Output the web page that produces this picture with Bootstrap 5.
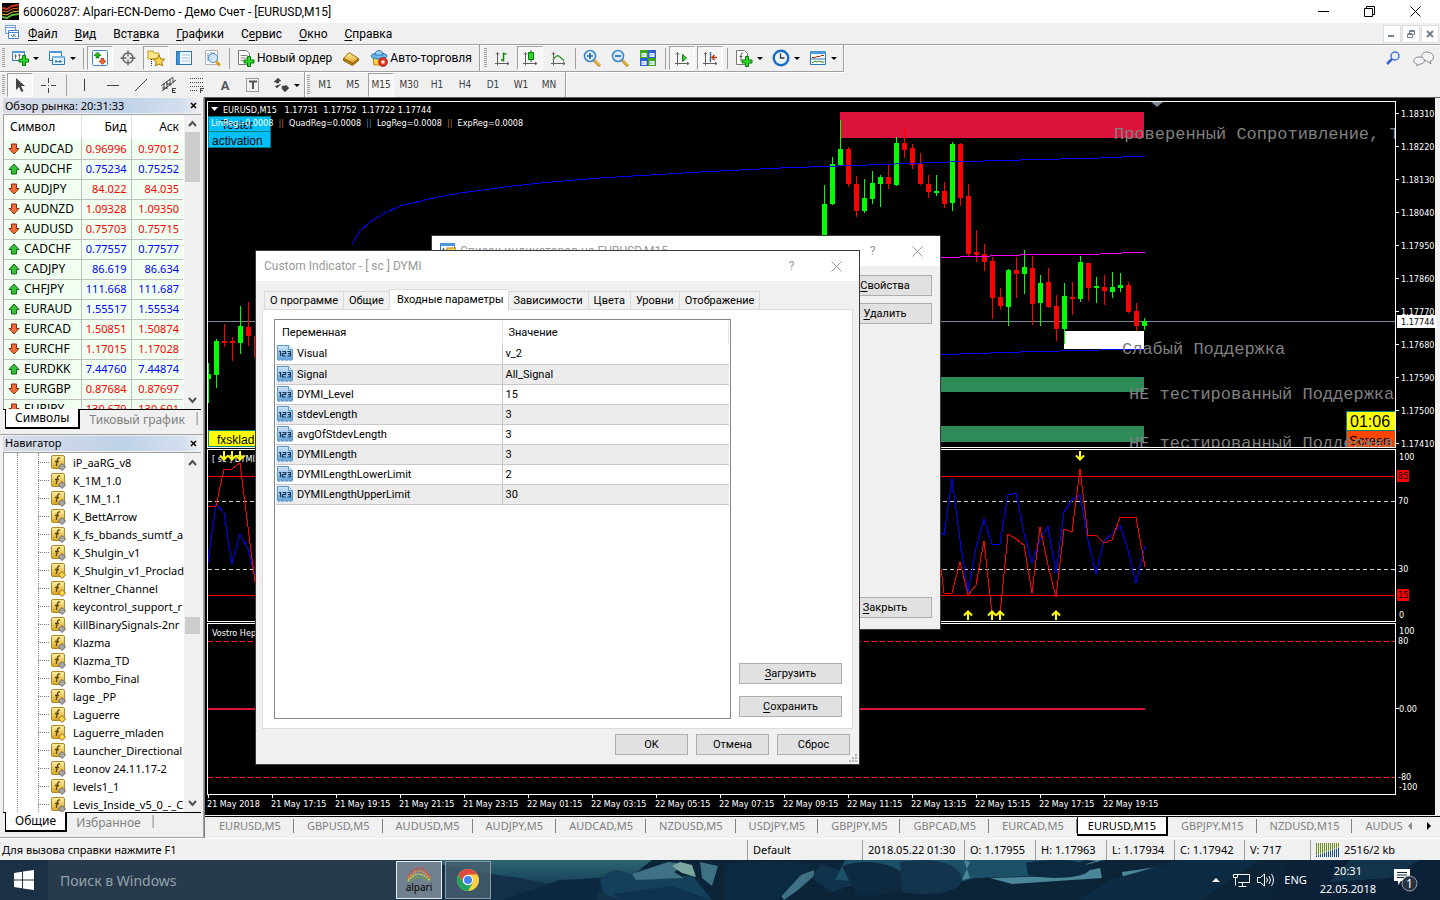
<!DOCTYPE html>
<html lang="ru">
<head>
<meta charset="utf-8">
<meta name="viewport" content="width=device-width, initial-scale=1">
<title>60060287: Alpari-ECN-Demo - Демо Счет - [EURUSD,M15]</title>
<link href="https://cdn.jsdelivr.net/npm/bootstrap@5.3.0/dist/css/bootstrap.min.css" rel="stylesheet">
<style>
:root{--ui:"Noto Sans","Open Sans",sans-serif;--dlg:Roboto,"Liberation Sans",sans-serif;--chart:"DejaVu Sans Condensed","DejaVu Sans",sans-serif;--face:#f0f0f0;--edge:#a0a0a0}
body{font:11px/16px var(--ui);color:#000;background:var(--face);overflow:hidden}
button{font:inherit;color:inherit;background:none;border:0;padding:0;border-radius:0}
a{color:inherit;text-decoration:none}
u{text-underline-offset:2px}
svg{display:block;flex:none}
/* window frame */
.titlebar{height:23px;background:#fff;font:12px/16px var(--dlg)}
.titlebar .wbtn{width:46px;height:21px}
.menubar{height:22px;border-bottom:1px solid var(--edge);box-shadow:inset 0 -1px #f0f0f0,0 1px #fff;font:12px/16px var(--dlg)}
.menubar a{padding:0 9px 0 8px}
.mdi{width:18px;height:18px;background:#fff;border:1px solid #ddd}
.toolrow{height:27px}
.toolset{height:27px;border-right:1px solid var(--edge);border-bottom:1px solid var(--edge);box-shadow:inset -1px -1px var(--face),inset 0 1px #fff,1px 1px #fff;padding-left:2px;padding-right:2px}
.toolrow.second .toolset{height:26px;border-bottom:0}
.grip{width:3px;height:20px;margin-right:1px;background:repeating-linear-gradient(#a0a0a0 0 1px,#f0f0f0 1px 2px)}
.tbtn{width:28px;height:25px}
.tbtn.drop{width:37px;padding-left:5px}
.tbtn.drop::after{content:"";border:3px solid transparent;border-top-color:#000;border-bottom:0;margin-left:4px}
.tbtn.on{width:26px;height:24px;margin:0 1px;border:1px solid #a0a0a0;border-right-color:#fff;border-bottom-color:#fff;background:repeating-conic-gradient(#fff 0 25%,#f0f0f0 0 50%) 0 0/2px 2px}
.tbtn.wide{width:auto;padding:0 5px;gap:2px;white-space:nowrap;font:12px/16px var(--dlg)}
.tbtn.tf{font:10px/14px var(--chart);color:#404040}
.tsep{width:1px;height:21px;background:#a0a0a0;margin:0 2px 0 3px}
.second .tsep{margin:0 4px}
/* left docks */
.docks{width:204px}
.dock{border:1px solid var(--edge);border-width:0 1px 1px 0;padding:1px 2px 0 3px;min-height:0}
.docktitle{height:15px;background:linear-gradient(90deg,#d9dce8,#bfd2e8 60%,#d2deee 90%,#f0f0f0);padding-left:2px}
.dockbody{border-left:1px solid var(--edge);border-top:1px solid var(--edge);background:#fff;overflow:hidden;min-height:0;margin-top:1px}
.quotes{width:179px;table-layout:fixed;font-size:11px;margin:0}
.quotes th{font-weight:400;font-size:12px;height:24px;padding:0 4px 0 6px;border-right:1px solid #e0e0e0}
.quotes td{height:20px;line-height:18px;padding:0 4px;background:#f0fff0;border-right:1px solid #c0c0c0;border-bottom:1px solid #c0c0c0;text-align:right}
.quotes td:first-child{font-size:12px;text-align:left}
.quotes td:last-child,.quotes th:last-child{border-right:0}
.quotes tr.up td+td{color:#00f}.quotes tr.dn td+td{color:#f00}
.quotes svg{display:inline-block;margin-right:4px;vertical-align:-2px}
.sbar{width:17px;background:var(--face)}
.sbar i{background:#cdcdcd;margin:0 1px;display:block}
.docktabs{height:25px;border-top:1px solid #000;font-size:12px;color:#808080;white-space:nowrap}
.docktabs button{height:19px;padding:0 9px}
.docktabs .active{color:#000;background:#fff;border:1px solid #000;border-width:0 2px 2px 1px;margin:-1px 0 0 2px;height:20px}
.tree{font-size:11px;line-height:18px;padding-top:1px;background:repeating-linear-gradient(#808080 0 1px,#fff 1px 2px) 13px 0/1px 100% no-repeat,repeating-linear-gradient(#808080 0 1px,#fff 1px 2px) 34px 0/1px 100% no-repeat}
.tree li{height:18px;padding-left:34px;white-space:nowrap;overflow:hidden}
.tree li::before{content:"";width:11px;height:1px;background:repeating-linear-gradient(90deg,#808080 0 1px,#fff 1px 2px);margin-right:1px;flex:none}
.tree svg{margin-right:7px}
/* chart window */
.chartwin{border-left:1px solid #808080;border-top:1px solid #606060;min-width:0}
.canvas{background:#000;padding:3px 0 0 2px;margin-right:5px;color:#fff;font:9px/12px var(--chart);min-height:0}
.pane{margin-bottom:1px;min-height:0}
.plot{border:1px solid #fff;position:relative;overflow:hidden;min-width:0}
.plot>svg{width:100%;height:100%}
.axis{width:39px;overflow:visible;height:100%}
.plot text{white-space:pre}
.cour{font:17px "Liberation Mono",monospace;fill:#808080}
.arial{font-family:"Liberation Sans",sans-serif}
.times{height:20px;border:0}
.times span{width:64px;flex:none;white-space:nowrap;padding-top:3px;position:relative}
.times span::before{content:"";position:absolute;left:1px;top:-1px;width:1px;height:4px;background:#fff}
.charttabs{height:22px;border-top:1px solid #000;margin-top:1px;color:#808080;overflow:hidden;padding-left:1px}
.charttabs button{height:18px;padding:0 12px 0 13px;white-space:nowrap;flex:none;border-right:1px solid transparent;background:linear-gradient(#808080,#808080) 100% 50%/1px 14px no-repeat border-box}
.charttabs .active{background:#fff;color:#000;border:1px solid #000;border-width:0 2px 2px 1px;height:19px;padding:0 10px 0 10px}
.statusbar{height:22px;border-top:1px solid #fff}
.statusbar>span{border-left:1px solid #a0a0a0;padding-left:5px;height:20px;line-height:20px;white-space:nowrap;flex:none}
/* taskbar */
.taskbar{height:40px;background:#0b2236;color:#fff;position:relative;overflow:hidden}
.taskbar>*{position:relative}
.taskbar>.scene{position:absolute;inset:0;width:100%;height:100%}
.search{width:348px;height:40px;border:0;background:#2a3e4fcc;color:#fff;font-size:14px;padding:0 12px}
.search::placeholder{color:#93a2ad;opacity:1}
.tile{width:46px;height:38px;border:1px solid #8d9ba5;background:#49606fcc;margin-right:3px}
.tile.cur{border-color:#e8ecef;background:#7c8a96e6}
/* dialogs */
.dlg{position:absolute;background:var(--face);border:1px solid #3a3a3a;font:11px/14px var(--dlg)}
.dlg header{height:30px;background:#fff;color:#999;font:12px/16px var(--dlg);padding-left:8px}
.dlg header button{width:45px}
.dbtn{height:21px;border:1px solid #adadad;background:#e1e1e1;display:block}
.dlg .nav-tabs{border:0;padding:8px 0 0 8px}
.dlg .nav-tabs .nav-link{border:1px solid #d9d9d9;border-right-width:0;border-bottom:0;border-radius:0;background:var(--face);color:#000;padding:2px 5px;height:18px;margin:0}
.dlg .nav-tabs li:last-child .nav-link{border-right-width:1px}
.dlg .nav-tabs .nav-link.active{background:#fff;height:21px;padding:2px 4px 3px 7px;margin-bottom:-1px;position:relative}
.tabbody{border:1px solid #dcdcdc;background:#fff;margin:0 6px;padding:9px 10px 9px 11px}
.params{border:1px solid #828790;width:457px;padding:1px}
.params table{width:100%;table-layout:fixed}
.params th{font-weight:400;height:23px;padding:0 6px;border-right:1px solid #e5e5e5}
.params td{height:20px;padding:0 3px;border-right:1px solid #c8c8c8;border-bottom:1px solid #c8c8c8;line-height:19px}
.params td+td{border-right:0}
.params tr:nth-child(even) td{background:#ebebeb}
.params td svg{display:inline-block;vertical-align:-4px;margin:0 4px 0 -2px}
</style>
</head>
<body>
<svg width="0" height="0" class="position-absolute">
 <defs>
  <linearGradient id="gold" x2="0" y2="1"><stop stop-color="#fff0a0"/><stop offset="1" stop-color="#d9a520"/></linearGradient>
  <linearGradient id="blue" x2="0" y2="1"><stop stop-color="#cfe6fa"/><stop offset="1" stop-color="#5e9fd8"/></linearGradient>
  <linearGradient id="swim" x2="0" y2="1"><stop stop-color="#2d6673"/><stop offset="1" stop-color="#153e55"/></linearGradient>
 </defs>
 <symbol id="i-new" viewBox="0 0 18 18"><path d="M1.500 2.500h12v9h-12z" fill="#fff" stroke="#2f76b5"/><path d="M1 2h13v2H1z" fill="#4b96d6"/><path d="M4.500 5v5M3 7h3M8.500 5v4M7 6h3" stroke="#777" fill="none"/><path d="M11.500 6.500h3v3.500h3v3h-3v3.500h-3v-3.500h-3.500v-3h3.500z" fill="#2bd92b" stroke="#0a7a0a"/></symbol>
 <symbol id="i-prof" viewBox="0 0 18 18"><path d="M1.500 2.500h12v9h-12z" fill="#fff" stroke="#2f76b5"/><path d="M1 2h13v2H1z" fill="#4b96d6"/><path d="M4.500 7.500h12v8h-12z" fill="#e4f1fb" stroke="#2f76b5"/><path d="M4 7h13v2H4z" fill="#7ab4e4"/><path d="M7 12.500h7M8 11v3M12 11v3" stroke="#2f76b5"/></symbol>
 <symbol id="i-watch" viewBox="0 0 18 18"><rect x="1.500" y="1.500" width="15" height="15" rx="1" fill="#fff" stroke="#3f88c8"/><path d="M6.500 3l3.500 3.500H8V9H5V6.500H3z" fill="#27b827" stroke="#087008" stroke-width=".7"/><path d="M11.500 15.500L15 12h-2V9.500h-3V12H8z" fill="#f2662b" stroke="#a5330b" stroke-width=".7"/></symbol>
 <symbol id="i-aim" viewBox="0 0 18 18"><circle cx="9" cy="9" r="5" fill="none" stroke="#606060" stroke-width="1.500"/><path d="M9 1.500v6M9 10.500v6M1.500 9h6M10.500 9h6" stroke="#606060" stroke-width="1.300"/></symbol>
 <symbol id="i-star" viewBox="0 0 18 18"><path d="M1 2h5l1 2h5v6H1z" fill="#fbe68a" stroke="#c99a1c"/><path d="M4.500 10v7" stroke="#333" stroke-dasharray="1 1"/><path d="M12 6l1.700 3.800 4 .4-3 2.700.9 4L12 15l-3.600 1.900.9-4-3-2.700 4-.4z" fill="#ffd84a" stroke="#a87408"/></symbol>
 <symbol id="i-nav" viewBox="0 0 18 18"><rect x="1.500" y="2.500" width="15" height="13" fill="#eef6fd" stroke="#2f76b5"/><path d="M2 3h3v12H2z" fill="#3d8fd8"/><path d="M7 6h8M7 9h8M7 12h8" stroke="#a9c8e2"/></symbol>
 <symbol id="i-test" viewBox="0 0 18 18"><path d="M2.500 1.500h12v14h-12z" fill="#fff" stroke="#b0b0b0"/><path d="M5 4v8M8 3v9M11 3v6" stroke="#6c8aa8"/><circle cx="10" cy="9" r="4.500" fill="#cfe6f8cc" stroke="#4a90cf"/><path d="M13 12.500l4 4" stroke="#d79a1e" stroke-width="2.500"/></symbol>
 <symbol id="i-order" viewBox="0 0 18 18"><path d="M1.500 1.500h8l3 3v11h-11z" fill="#fff" stroke="#777"/><path d="M3.500 6.500h7M3.500 9h7M3.500 11.500h4" stroke="#888"/><path d="M10.500 7.500h3v3.500h3.500v3h-3.500v3.500h-3v-3.500h-3.500v-3h3.500z" fill="#2bd92b" stroke="#0a7a0a"/></symbol>
 <symbol id="i-book" viewBox="0 0 18 18"><path d="M1.500 9.500L7 3.500l9.500 6-5.500 5z" fill="url(#gold)" stroke="#9c6a0c"/><path d="M1.500 9.500v2l9 5 6-5v-2l-5.500 5z" fill="#c98a18" stroke="#8a5c08"/></symbol>
 <symbol id="i-auto" viewBox="0 0 18 18"><path d="M3 8l1 8h9l2-8z" fill="#ffd24c" stroke="#b98310"/><ellipse cx="9" cy="7" rx="8" ry="3" fill="#6db7ea" stroke="#2b74b0"/><path d="M5 6c0-6 8-6 8 0z" fill="#9dd2f5" stroke="#2b74b0"/><circle cx="13" cy="13" r="4.500" fill="#e03020" stroke="#8f1207" stroke-width=".6"/><path d="M11.500 11.500h3v3h-3z" fill="#fff"/></symbol>
 <symbol id="ax" viewBox="0 0 18 18"><path d="M4.500 4v12.500M2 14.500h14M3 5.500l1.500-2L6 5.500M14 13l2 1.500-2 1.500" stroke="#606060" fill="none"/></symbol>
 <symbol id="i-bars" viewBox="0 0 18 18"><use href="#ax"/><path d="M10.500 3.500v9M10.500 5h3M8 11h2.500" stroke="#0c8a0c" stroke-width="1.500" fill="none"/></symbol>
 <symbol id="i-cand" viewBox="0 0 18 18"><use href="#ax"/><path d="M10 1v12" stroke="#0c7a0c"/><path d="M7.500 3.500h5v7h-5z" fill="#2fd52f" stroke="#0c7a0c"/></symbol>
 <symbol id="i-line" viewBox="0 0 18 18"><use href="#ax"/><path d="M4 11c3-5 5-5 7-3s3 2 4 4" stroke="#3c9a3c" fill="none" stroke-width="1.300"/></symbol>
 <symbol id="lens" viewBox="0 0 18 18"><path d="M11 11l6 6" stroke="#c98f14" stroke-width="3"/><path d="M11.500 11l5 5" stroke="#ffe27a"/><circle cx="7" cy="7" r="5.500" fill="#d8ecfb" stroke="#3d87c8" stroke-width="1.600"/></symbol>
 <symbol id="i-zin" viewBox="0 0 18 18"><use href="#lens"/><path d="M4 7h6M7 4v6" stroke="#2a6dad" stroke-width="1.700"/></symbol>
 <symbol id="i-zout" viewBox="0 0 18 18"><use href="#lens"/><path d="M4 7h6" stroke="#2a6dad" stroke-width="1.700"/></symbol>
 <symbol id="i-tile" viewBox="0 0 18 18"><path d="M1 1h8v8H1z" fill="#3fa51c"/><path d="M9 1h8v8H9zM1 9h8v8H1z" fill="#2c62cf"/><path d="M9 9h8v8H9z" fill="#3fa51c"/><path d="M2.500 4h5v4h-5zM10.500 4h5v4h-5zM2.500 12h5v4h-5zM10.500 12h5v4h-5z" fill="#e9f2fb"/><path d="M3 6h3M11 6h3M3 14h3M11 14h3" stroke="#8fb0d0"/></symbol>
 <symbol id="i-scroll" viewBox="0 0 18 18"><use href="#ax"/><path d="M9.500 5.500l4 3.500-4 3.500z" fill="#3cd03c" stroke="#0c7a0c"/></symbol>
 <symbol id="i-shift" viewBox="0 0 18 18"><use href="#ax"/><path d="M9.500 3v10" stroke="#2b6ca5" stroke-width="1.400"/><path d="M16 8.500h-4M13.500 6L11 8.500l2.500 2.500" stroke="#c23a12" stroke-width="1.500" fill="none"/></symbol>
 <symbol id="i-ind" viewBox="0 0 18 18"><path d="M1.500 1.500h8l3 3v11h-11z" fill="#fff" stroke="#777"/><path d="M8 4c-2 0-2 1-2 3v5M4.500 7.500h3" stroke="#555" fill="none"/><path d="M10.500 7.500h3v3.500h3.500v3h-3.500v3.500h-3v-3.500h-3.500v-3h3.500z" fill="#2bd92b" stroke="#0a7a0a"/></symbol>
 <symbol id="i-clock" viewBox="0 0 18 18"><circle cx="9" cy="9" r="7.300" fill="#eef6fd" stroke="#1a6fc4" stroke-width="2.400"/><path d="M8.500 4.500V9h4" stroke="#333" fill="none" stroke-width="1.300"/></symbol>
 <symbol id="i-tpl" viewBox="0 0 18 18"><path d="M1.500 2.500h15v13h-15z" fill="#fff" stroke="#2f76b5"/><path d="M1 2h16v3H1z" fill="#4b96d6"/><path d="M3 8.500h3l2-1h3l1-1h3" stroke="#a52a12" fill="none"/><path d="M2 10h14" stroke="#2f76b5"/><path d="M3 14l3-2 2 1 3-1 1 1h3" stroke="#1f9a1f" fill="none"/></symbol>
 <symbol id="i-cur" viewBox="0 0 18 18"><path d="M5 2v12l3-3 2.500 5 2-1L10 10h4z" fill="#444"/></symbol>
 <symbol id="i-cross" viewBox="0 0 18 18"><path d="M9.500 2v5M9.500 12v5M2 9.500h5M12 9.500h5M9 9.500h1" stroke="#444"/></symbol>
 <symbol id="i-v" viewBox="0 0 18 18"><path d="M8.500 3v12" stroke="#444"/></symbol>
 <symbol id="i-h" viewBox="0 0 18 18"><path d="M3 9.500h12" stroke="#444"/></symbol>
 <symbol id="i-d" viewBox="0 0 18 18"><path d="M3 15L15 3" stroke="#444"/></symbol>
 <symbol id="i-chan" viewBox="0 0 18 18"><path d="M1 10L13 1M2 15L16 4M4 7v7M7 5v8M10 3v7M13 2v5M2 12h5M6 8h6" stroke="#444"/><path d="M12.500 12v5M12 12.500h4M12 14.500h3M12 16.500h4" stroke="#444"/></symbol>
 <symbol id="i-fib" viewBox="0 0 18 18"><path d="M2 2.500h14M2 6.500h14M2 10.500h14M2 14.500h8" stroke="#444" stroke-dasharray="1 1"/><path d="M12.500 12v5M12 12.500h4M12 14.500h3" stroke="#444"/></symbol>
 <symbol id="i-lbl" viewBox="0 0 18 18"><path d="M2.500 2.500h12v13h-12z" fill="none" stroke="#444" stroke-dasharray="1 1"/><path d="M5 5.500h8M9 5v8" stroke="#555" stroke-width="2"/></symbol>
 <symbol id="i-arr" viewBox="0 0 18 18"><path d="M2 6l4-4 3 3H7v2H4V6zM3 10l2 2 4-4M10 10l3 0 1-1 3 3-4 4-2-2v-1h-1z" fill="#444" stroke="#444" stroke-width=".5"/></symbol>
 <symbol id="i-f" viewBox="0 0 16 16"><rect x="1.500" y=".5" width="13" height="13" rx="1.500" fill="url(#gold)" stroke="#b08a28"/><path d="M10 3c-2-.5-2.500 1-2.800 3L6.300 11M5 6.500h4" fill="none" stroke="#5b430a" stroke-width="1.300"/></symbol>
 <symbol id="i-123" viewBox="0 0 16 16"><path d="M.5.500h11l4 4v10l-2 1-2-1-2 1-2-1-2 1-2-1-2 1-1-1z" fill="url(#blue)" stroke="#5b96c8"/><path d="M11.500.500v4h4" fill="#eaf5fd" stroke="#5b96c8"/><path d="M2 6.500h1.500V11M5.500 6.500h3v2h-3V11h3M10.500 6.500h3V11h-3M11 8.700h2" fill="none" stroke="#12375a" stroke-width="1.200"/></symbol>
 <symbol id="a-up" viewBox="0 0 12 12"><path d="M6 1l5 5.500H8.500V11h-5V6.500H1z" fill="#35c235" stroke="#0f6a14"/></symbol>
 <symbol id="a-dn" viewBox="0 0 12 12"><path d="M6 11l5-5.500H8.500V1h-5v4.500H1z" fill="#f46b3a" stroke="#8f2a0a"/></symbol>
</svg>

<div class="vh-100 d-flex flex-column position-relative">
 <div class="titlebar d-flex align-items-center">
  <svg width="17" height="17" viewBox="0 0 17 17" style="margin:0 4px 0 2px"><path d="M0 0h17v17H0z"/><path d="M0 5l5 1 5-3 7-1" stroke="#d33018" fill="none" stroke-width="2"/><path d="M0 8l5 1 5-3 7-1" stroke="#ef6a25" fill="none"/><path d="M0 11l5 1 5-3 7-1" stroke="#e5c42b" fill="none"/><path d="M0 14l5 1 5-3 7-1" stroke="#5dbb34" fill="none" stroke-width="2"/></svg>
  <span class="flex-grow-1">60060287: Alpari-ECN-Demo - Демо Счет - [EURUSD,M15]</span>
  <button class="wbtn d-flex align-items-center justify-content-center" aria-label="Свернуть"><svg width="11" height="11"><path d="M0 5.500h11" stroke="#000"/></svg></button>
  <button class="wbtn d-flex align-items-center justify-content-center" aria-label="Восстановить"><svg width="11" height="11"><path d="M.5 2.500h8v8h-8zM2.500 2.500v-2h8v8h-2" stroke="#000" fill="none"/></svg></button>
  <button class="wbtn d-flex align-items-center justify-content-center" style="margin-right:2px" aria-label="Закрыть"><svg width="11" height="11"><path d="M.5.500l10 10M10.500.500l-10 10" stroke="#000"/></svg></button>
 </div>
 <nav class="menubar d-flex align-items-center" aria-label="Меню">
  <svg width="15" height="15" viewBox="0 0 15 15" style="margin:0 0 2px 5px"><path d="M.5.500h10v8H.5zM.5 2.500h10" fill="#fff" stroke="#6c9fdc"/><path d="M3.500 5.500h10v8h-10zM3.500 7.500h10M6 10l2 2 1-3 2 3" fill="#fff" stroke="#4b84cf"/></svg>
  <a href="#"><u>Ф</u>айл</a><a href="#"><u>В</u>ид</a><a href="#">Вст<u>а</u>вка</a><a href="#"><u>Г</u>рафики</a><a href="#">С<u>е</u>рвис</a><a href="#"><u>О</u>кно</a><a href="#"><u>С</u>правка</a>
  <div class="ms-auto d-flex" style="gap:1px;padding-right:1px">
   <button class="mdi d-flex align-items-center justify-content-center" aria-label="Свернуть окно"><svg width="8" height="8"><path d="M0 6h6" stroke="#708090" stroke-width="2"/></svg></button>
   <button class="mdi d-flex align-items-center justify-content-center" aria-label="Восстановить окно"><svg width="8" height="8"><path d="M.5 4.500h5v3h-5zM.5 3.500h5M2.500 3V.5h5v4H6M2.500 1.500h5" stroke="#708090" fill="none"/></svg></button>
   <button class="mdi d-flex align-items-center justify-content-center" aria-label="Закрыть окно"><svg width="8" height="8"><path d="M1 1l6 6M7 1L1 7" stroke="#708090" stroke-width="2"/></svg></button>
  </div>
 </nav>
 <div class="toolrow d-flex">
  <div class="toolset d-flex align-items-center" id="bar1"></div>
  <div class="toolset d-flex align-items-center ps-1" id="bar2"></div>
  <div class="ms-auto d-flex align-items-center" style="gap:12px;padding-right:5px">
   <button aria-label="Поиск"><svg width="15" height="15"><path d="M1 13l6-6" stroke="#3c62c8" stroke-width="2.500"/><circle cx="9" cy="5" r="4" fill="#e8f1ff" stroke="#4a76dc" stroke-width="1.500"/></svg></button>
   <button aria-label="Чат"><svg width="22" height="16"><path d="M14 1c8 0 8 9 3 9l1 3-4-3c-7-1-7-9 0-9z" fill="#f4f4f4" stroke="#8a8a8a"/><path d="M6 6c7 0 7 7 1 7l-3 2v-2c-5-1-4-7 2-7z" fill="#f4f4fa" stroke="#8a8a8a"/></svg></button>
  </div>
 </div>
 <div class="toolrow second d-flex" style="height:25px">
  <div class="toolset d-flex align-items-center pe-0" id="bar3"></div>
  <div class="toolset d-flex align-items-center" id="bar4"></div>
 </div>

 <main class="d-flex flex-grow-1" style="min-height:0">
  <aside class="docks d-flex flex-column flex-shrink-0">
   <section class="dock d-flex flex-column" style="flex:337 1 0">
    <div class="docktitle d-flex justify-content-between align-items-center"><span>Обзор рынка: 20:31:33</span><button class="pe-1" aria-label="Закрыть обзор рынка"><svg width="7" height="7"><path d="M1 1l5 5M6 1L1 6" stroke="#000" stroke-width="1.500"/></svg></button></div>
    <div class="dockbody d-flex flex-grow-1">
     <div class="flex-grow-1"><table class="quotes"><colgroup><col style="width:77px"><col style="width:50px"><col></colgroup><thead><tr><th>Символ</th><th class="text-end">Бид</th><th class="text-end">Аск</th></tr></thead><tbody id="quotes"></tbody></table></div>
     <div class="sbar d-flex flex-column"><svg width="17" height="17"><path d="M5 11l3.500-4 3.500 4" fill="none" stroke="#505050" stroke-width="2"/></svg><i style="height:50px"></i><svg class="mt-auto" width="17" height="17"><path d="M5 6l3.500 4L12 6" fill="none" stroke="#505050" stroke-width="2"/></svg></div>
    </div>
    <div class="docktabs d-flex"><button class="active">Символы</button><button>Тиковый график</button><span>|</span></div>
   </section>
   <section class="dock d-flex flex-column" style="flex:403 1 0">
    <div class="docktitle d-flex justify-content-between align-items-center"><span>Навигатор</span><button class="pe-1" aria-label="Закрыть навигатор"><svg width="7" height="7"><path d="M1 1l5 5M6 1L1 6" stroke="#000" stroke-width="1.500"/></svg></button></div>
    <div class="dockbody d-flex flex-grow-1">
     <ul class="tree list-unstyled m-0 flex-grow-1 overflow-hidden" id="tree"></ul>
     <div class="sbar d-flex flex-column"><svg width="17" height="17"><path d="M5 12l3.500-4 3.500 4" fill="none" stroke="#505050" stroke-width="2"/></svg><i style="height:17px;margin-top:147px"></i><svg class="mt-auto" width="17" height="17"><path d="M5 6l3.500 4L12 6" fill="none" stroke="#505050" stroke-width="2"/></svg></div>
    </div>
    <div class="docktabs d-flex"><button class="active">Общие</button><button>Избранное</button><span>|</span></div>
   </section>
  </aside>

  <section class="chartwin d-flex flex-column flex-grow-1">
   <div class="canvas d-flex flex-column flex-grow-1">
    <div class="pane d-flex flex-grow-1"><div class="plot flex-grow-1"><svg id="p1"></svg></div><svg class="axis" id="a1"></svg></div>
    <div class="pane d-flex" style="height:173px"><div class="plot flex-grow-1"><svg id="p2"></svg></div><svg class="axis" id="a2"></svg></div>
    <div class="pane d-flex mb-0" style="height:172px"><div class="plot flex-grow-1"><svg id="p3"></svg></div><svg class="axis" id="a3"></svg></div>
    <div class="times d-flex overflow-visible" id="times"></div>
   </div>
   <nav class="charttabs d-flex position-relative" id="ctabs" aria-label="Графики"></nav>
  </section>
 </main>

 <footer class="statusbar d-flex align-items-center">
  <div class="flex-grow-1" style="padding-left:2px">Для вызова справки нажмите F1</div>
  <span style="width:115px">Default</span><span style="width:102px">2018.05.22 01:30</span><span style="width:71px">O: 1.17955</span><span style="width:71px">H: 1.17963</span><span style="width:68px">L: 1.17934</span><span style="width:70px">C: 1.17942</span><span style="width:66px">V: 717</span>
  <span class="d-flex align-items-center gap-1" style="width:130px"><svg width="24" height="14" id="net"></svg>2516/2 kb</span>
 </footer>

 <div class="taskbar d-flex align-items-center">
  <svg class="scene" viewBox="0 0 1440 40" preserveAspectRatio="none"><path d="M0 0h1440v40H0z" fill="#0c2438"/><path d="M0 0h390v40H0z" fill="#1b3044"/><path d="M390 0h250l20 40H390z" fill="#123149"/><path d="M440 0h212l-18 14-40 4-34 8-40-8-30-4-50-10z" fill="url(#swim)"/><path d="M560 20l44-2-8 22h-92z" fill="#0c2841"/><path d="M600 20c12-14 20-10 30-6l40 5 22-4 20 25h-90l-18-6z" fill="#14405b"/><path d="M632 14l36-12 20 2-14 8 10 6-48 2zM700 2l18 4-6 20-10-8zM780 34l18-18 16-6v6l-16 14-14 10z" fill="#3d7183"/><path d="M672 6l8-4 12 3 4 12-14-4z" fill="#7aa79f"/><path d="M612 34l60-8 40 14h-90z" fill="#0e3350"/><path d="M724 6c30-8 60-4 90-2l-14 12-22 24h-54z" fill="#0b2a41"/><path d="M820 4l22 6 14 14-24 8-20-14z" fill="#10334b"/><path d="M845 0h240l-50 16-60 2-30 8-110-6z" fill="#1c5069"/><path d="M842 6c26-10 60 0 64 12s-20 18-50 16z" fill="#0d2a40"/><path d="M964 0l6 18-8 2 8-18zM1026 5l78-5-74 20 70-20zM990 18l70-2 40-8 2 10-90 6zM1122 12l100-14-66 14-32 12z" fill="#4b879b"/><path d="M900 2c40-6 60 4 62 16s-26 20-60 14z" fill="#12354d"/><path d="M1026 3c30-6 66-2 64 6s-34 12-62 6z" fill="#0c2a3f"/><path d="M1180 0h80l-60 40h-120l30-20z" fill="#0d2b42"/><path d="M1290 0h150v40h-170z" fill="#0b2137"/><path d="M1350 0h70l-30 18-60 4z" fill="#12354b"/></svg>
  <button class="d-flex align-items-center justify-content-center" style="width:48px;height:40px" aria-label="Пуск"><svg width="20" height="20" viewBox="0 0 20 20"><path d="M0 3l8-1.200v7.700H0zM9 1.600L20 0v9.500H9zM0 10.500h8v7.700L0 17zM9 10.500h11V20L9 18.400z" fill="#fff"/></svg></button>
  <input class="search" type="text" placeholder="Поиск в Windows" aria-label="Поиск в Windows">
  <button class="tile cur ms-0 d-flex flex-column align-items-center justify-content-center text-black" style="font-size:10px;line-height:11px"><svg width="24" height="15" viewBox="0 0 24 15" fill="none" stroke-dasharray="2 1"><path d="M1 10Q12-8 23 10" stroke="#e04a3a" stroke-width="1.500"/><path d="M1 12Q12-4 23 12" stroke="#ef8a3a" stroke-width="1.500"/><path d="M1 14Q12 0 23 14" stroke="#cdd04a" stroke-width="1.500"/><path d="M2 16Q12 4 22 16" stroke="#6aa84a" stroke-width="1.500"/></svg>alpari</button>
  <button class="tile d-flex align-items-center justify-content-center" aria-label="Chrome"><svg width="22" height="22" viewBox="0 0 22 22"><circle cx="11" cy="11" r="11" fill="#fbcf3f"/><path d="M1.500 5.500A11 11 0 0 1 20.500 5.500H11L6.200 13.700z" fill="#dd4b3e"/><path d="M1.500 5.500A11 11 0 0 0 11 22l4.800-8.300L6.200 13.700z" fill="#1fa463"/><circle cx="11" cy="11" r="5.200" fill="#fff"/><circle cx="11" cy="11" r="4" fill="#4285f4"/></svg></button>
  <div class="ms-auto d-flex align-items-center" style="padding-right:22px">
   <svg width="8" height="4" style="margin-right:13px"><path d="M0 4l4-4 4 4z" fill="#fff"/></svg>
   <svg width="17" height="14" style="margin-right:7px" fill="none" stroke="#fff"><path d="M4 1.500h12.500v8H5M.5 1.500h4v3h-4zM2.500 4.500v8M9.500 10v3M5.500 13.500h8"/></svg>
   <svg width="18" height="14" style="margin-right:9px" fill="none" stroke="#fff"><path d="M.5 4.500h3l4-3.500v12l-4-3.500h-3zM9.500 4.500q2 2.500 0 5M12 3q3 4 0 8M14.500 1q4 6 0 12"/></svg>
   <span style="margin-right:13px">ENG</span>
   <div class="text-center" style="margin-right:18px;line-height:18px"><div>20:31</div><div>22.05.2018</div></div>
   <svg width="24" height="24"><path d="M0 1h16v12H7l-3 4v-4H0z" fill="#fff"/><path d="M3 4.500h10M3 7h10M3 9.500h7" stroke="#1a2a38"/><circle cx="15.500" cy="15.500" r="7.500" fill="#2a3440" stroke="#9aa4ac"/><text x="12" y="20" fill="#fff" font-size="12">1</text></svg>
  </div>
 </div>

 <!-- indicator list dialog -->
 <div class="dlg d-flex flex-column" role="dialog" aria-label="Список индикаторов" style="left:431px;top:235px;width:510px;height:395px">
  <header class="d-flex align-items-center"><svg width="16" height="16" class="me-1"><path d="M.5.500h14v12H.5z" fill="#fff" stroke="#2f76b5"/><path d="M0 0h15v3H0z" fill="#4b96d6"/><path d="M3.500 5v5M2 7h3" stroke="#555"/><rect x="7" y="5" width="9" height="6" fill="#f5d75a" stroke="#b98a14"/></svg><span class="flex-grow-1">Список индикаторов на EURUSD,M15</span><button>?</button><button class="d-flex justify-content-center" aria-label="Закрыть список"><svg width="11" height="11"><path d="M.5.500l10 10M10.500.500l-10 10" stroke="#999"/></svg></button></header>
  <div class="d-flex flex-column align-items-end flex-grow-1 pe-2" style="padding-top:9px"><button class="dbtn" style="width:94px"><u>С</u>войства</button><button class="dbtn" style="width:94px;margin-top:7px"><u>У</u>далить</button><button class="dbtn mt-auto" style="width:94px;margin-bottom:11px"><u>З</u>акрыть</button></div>
 </div>

 <!-- custom indicator dialog -->
 <div class="dlg d-flex flex-column" role="dialog" aria-label="Custom Indicator" style="left:255px;top:250px;width:605px;height:515px">
  <header class="d-flex align-items-center"><span class="flex-grow-1">Custom Indicator - [ sc ] DYMI</span><button aria-label="Справка">?</button><button class="d-flex justify-content-center" aria-label="Закрыть диалог"><svg width="11" height="11"><path d="M.5.500l10 10M10.500.500l-10 10" stroke="#999"/></svg></button></header>
  <ul class="nav nav-tabs align-items-end" role="tablist">
   <li><button class="nav-link">О программе</button></li><li><button class="nav-link">Общие</button></li><li><button class="nav-link active">Входные параметры</button></li><li><button class="nav-link">Зависимости</button></li><li><button class="nav-link">Цвета</button></li><li><button class="nav-link">Уровни</button></li><li><button class="nav-link">Отображение</button></li>
  </ul>
  <div class="tabbody d-flex flex-grow-1">
   <div class="params"><table><colgroup><col style="width:226px"><col></colgroup><thead><tr><th>Переменная</th><th>Значение</th></tr></thead><tbody id="params"></tbody></table></div>
   <div class="d-flex flex-column justify-content-end flex-grow-1 ps-2" style="gap:12px;padding-bottom:2px"><button class="dbtn"><u>З</u>агрузить</button><button class="dbtn"><u>С</u>охранить</button></div>
  </div>
  <div class="d-flex justify-content-end gap-2 position-relative" style="padding:5px 9px 9px"><button class="dbtn" style="width:73px">OK</button><button class="dbtn" style="width:73px">Отмена</button><button class="dbtn" style="width:73px">Сброс</button>
   <svg class="position-absolute bottom-0 end-0" width="11" height="11" fill="#b8b8b8"><path d="M7 1h2v2H7zM7 4h2v2H7zM4 4h2v2H4zM7 7h2v2H7zM4 7h2v2H4zM1 7h2v2H1z"/></svg></div>
 </div>
</div>

<script>
const $ = id => document.getElementById(id);
const icon = (n, s = 18) => `<svg width="${s}" height="${s}"><use href="#i-${n}"/></svg>`;
const flex = 'd-flex align-items-center justify-content-center';
function bar(id, list) {
  $(id).innerHTML = '<span class="grip"></span>' + list.map(([n, kind, text]) => {
    if (n === '|') return '<span class="tsep"></span>';
    if (kind === 'tf' || kind === 'tf on') return `<button class="tbtn ${kind} ${flex}">${n}</button>`;
    if (kind === 'wide') return `<button class="tbtn wide ${flex}">${icon(n)}<span>${text}</span></button>`;
    if (kind === 'drop') return `<button class="tbtn drop d-flex align-items-center" aria-label="${n}">${icon(n)}</button>`;
    if (n === 'A') return `<button class="tbtn ${flex}" style="font:bold 13px var(--dlg);color:#555">A</button>`;
    return `<button class="tbtn ${kind || ''} ${flex}" aria-label="${n}">${icon(n)}</button>`;
  }).join('');
}
bar('bar1', [['new','drop'],['prof','drop'],['|'],['watch','on'],['aim'],['star','on'],['nav'],['test'],['|'],['order','wide','Новый ордер'],['book'],['auto','wide','Авто-торговля']]);
bar('bar2', [['bars'],['cand','on'],['line'],['|'],['zin'],['zout'],['tile'],['|'],['scroll','on'],['shift','on'],['|'],['ind','drop'],['clock','drop'],['tpl','drop']]);
bar('bar3', [['cur','on'],['cross'],['|'],['v'],['h'],['d'],['chan'],['fib'],['A'],['lbl'],['arr','drop']]);
bar('bar4', ['M1','M5','M15','M30','H1','H4','D1','W1','MN'].map(t => [t, t === 'M15' ? 'tf on' : 'tf']));

$('quotes').innerHTML = `AUDCAD 0.96996 0.97012 dn
AUDCHF 0.75234 0.75252 up
AUDJPY 84.022 84.035 dn
AUDNZD 1.09328 1.09350 dn
AUDUSD 0.75703 0.75715 dn
CADCHF 0.77557 0.77577 up
CADJPY 86.619 86.634 up
CHFJPY 111.668 111.687 up
EURAUD 1.55517 1.55534 up
EURCAD 1.50851 1.50874 dn
EURCHF 1.17015 1.17028 dn
EURDKK 7.44760 7.44874 up
EURGBP 0.87684 0.87697 dn
EURJPY 130.679 130.691 dn`.split('\n').map(r => { const [s,b,a,d] = r.split(' ');
  return `<tr class="${d}"><td><svg width="12" height="12"><use href="#a-${d}"/></svg>${s}</td><td>${b}</td><td>${a}</td></tr>`; }).join('');

$('tree').innerHTML = ['iP_aaRG_v8','K_1M_1.0','K_1M_1.1','K_BettArrow','K_fs_bbands_sumtf_a','K_Shulgin_v1','*K_Shulgin_v1_Proclad','*Keltner_Channel','keycontrol_support_r','KillBinarySignals-2nr','Klazma','Klazma_TD','Kombo_Final','lage _PP','*Laguerre','*Laguerre_mladen','Launcher_Directional','Leonov 24.11.17-2','levels1_1','Levis_Inside_v5_0_-_C'].map(t => {
  const gold = t[0] === '*';
  return `<li class="d-flex align-items-center"><svg width="16" height="16"><use href="#i-f"/><path d="M12 8.500l3.500 3.500-3.500 3.500L8.500 12z" fill="${gold ? '#ffd84a' : '#a8a8a8'}" stroke="${gold ? '#9c6a0c' : '#666'}"/></svg>${t.replace('*','')}</li>`; }).join('');

$('params').innerHTML = [['Visual','v_2'],['Signal','All_Signal'],['DYMI_Level','15'],['stdevLength','3'],['avgOfStdevLength','3'],['DYMILength','3'],['DYMILengthLowerLimit','2'],['DYMILengthUpperLimit','30']]
  .map(([k,v]) => `<tr><td>${icon('123',16)}${k}</td><td>${v}</td></tr>`).join('');

$('times').innerHTML = ['21 May 2018','21 May 17:15','21 May 19:15','21 May 21:15','21 May 23:15','22 May 01:15','22 May 03:15','22 May 05:15','22 May 07:15','22 May 09:15','22 May 11:15','22 May 13:15','22 May 15:15','22 May 17:15','22 May 19:15'].map(t => `<span>${t}</span>`).join('');

$('ctabs').innerHTML = ['EURUSD,M5','GBPUSD,M5','AUDUSD,M5','AUDJPY,M5','AUDCAD,M5','NZDUSD,M5','USDJPY,M5','GBPJPY,M5','GBPCAD,M5','EURCAD,M5','EURUSD,M15','GBPJPY,M15','NZDUSD,M15','AUDUSD,M15']
  .map(t => `<button class="${t === 'EURUSD,M15' ? 'active' : ''}">${t}</button>`).join('') +
  '<svg class="position-absolute top-0 end-0" width="37" height="20" style="background:#f0f0f0"><path d="M9 5v8l-4-4z" fill="#888"/><path d="M24 5v8l4-4z"/></svg>';

$('net').innerHTML = Array.from({length:12}, (_, i) => `<path d="M${i*2+.5} 0v${12-i*.7}" stroke="#6b8e23"/><path d="M${i*2+.5} ${12.5-i*.7}V14" stroke="#1a4a80"/>`).join('');

/* chart: x is the bar position, then high, body top, body bottom, low as screen rows */
const candles = `208 363 374 379 403 g;216 339 341 375 388 g;224 324 341 343 347 r;232 337 341 343 361 r;240 306 326 343 354 g;248 302 327 336 346 r;256 330 336 358 360 r
824 185 204 250 250 g;832 157 164 204 205 g;840 120 149 165 165 g;848 147 149 184 187 r;856 176 184 211 217 r;864 179 198 211 213 g;872 171 183 199 204 g;880 175 177 184 207 g;888 165 177 184 189 r;896 137 143 185 186 g;904 129 143 150 158 r;912 144 148 165 169 r;920 153 164 184 185 r;928 175 184 192 198 r;936 175 191 193 196 g;944 182 191 204 208 r;952 142 144 203 211 g;960 143 144 198 206 r;968 184 196 254 256 r;976 230 252 255 262 r;984 244 254 262 271 r;992 257 261 298 319 r;1000 288 297 306 310 r;1008 269 270 307 326 g;1016 257 270 274 298 r;1024 250 267 274 294 g;1032 256 268 304 325 r;1040 275 283 303 326 g;1048 268 282 307 308 r;1056 295 306 329 341 r;1064 283 296 329 344 g;1072 282 297 299 315 r;1080 256 262 299 302 g;1088 263 263 288 301 r;1096 277 286 288 303 g;1104 275 287 291 305 r;1112 272 287 292 298 g;1120 273 285 288 292 g;1128 282 285 312 313 r;1136 303 311 326 331 r;1144 318 321 326 330 g`
  .split(/[;\n]/).map(s => s.split(' ')).map(([x,h,t,b,l,c]) => { const f = c === 'g' ? '#0f0' : '#f00';
  return `<path d="M${x} ${h}h1V${l}h-1z" fill="${f}"/><path d="M${x-2} ${t}h5V${b}h-5z" fill="${f}"/>`; }).join('');
const line = (p, c, w = 1) => `<polyline points="${p}" fill="none" stroke="${c}" stroke-width="${w}" shape-rendering="crispEdges"/>`;
const hline = (y, c, dash = '') => `<line x1="0" x2="100%" y1="${y}.5" y2="${y}.5" stroke="${c}" stroke-dasharray="${dash}"/>`;
const box = (x, y, w, h, c) => `<rect x="${x}.5" y="${y}.5" width="${w}" height="${h}" fill="${c}" stroke="#008080"/>`;

$('p1').innerHTML = `${hline(219,'#778899')}<g transform="translate(-208,-102)">
<path d="M840 112h304v26H840z" fill="#dc143c"/><path d="M1064 331h80v18h-80z" fill="#fff"/><path d="M700 377h444v15H700zM700 426h444v16H700z" fill="#2e8b57"/>
${candles}
${line('352,244 360,231 370,222 383,214 400,206 433,198 460,193 513,186 540,183 587,179 600,178 700,172 780,168 868,165 949,162 1020,160 1100,158 1145,156','#00f')}
${line('900,259 1020,255 1100,254 1145,252','#f0f')}${line('900,356 1020,352 1100,350 1145,349','#00f')}
<path d="M1151 102h12l-6 5z" fill="#778899"/>
<path d="M211 107h7l-3.500 4z" fill="#fff"/>
<g class="arial" font-size="12">${box(208,116,62,15,'#00bfff')}<text x="221" y="129">Tester</text>${box(208,131,62,16,'#00bfff')}<text x="212" y="145">activation</text>
${box(208,430,62,16,'#ff0')}<text x="217" y="444">fxsklad</text></g>
<g class="arial" font-size="16">${box(1346,411,50,19,'#ff0')}<text x="1350" y="427">01:06</text>${box(1346,430,50,18,'#ff4500')}<text x="1349" y="445" font-size="13">Screen</text></g>
<text class="cour" x="1114" y="139">Проверенный Сопротивление, Т</text><text class="cour" x="1122" y="354">Слабый Поддержка</text><text class="cour" x="1129" y="399">НЕ тестированный Поддержка</text><text class="cour" x="1129" y="448">НЕ тестированный Поддержка</text>
<g fill="#fff"><text x="223" y="113">EURUSD,M15   1.17731  1.17752  1.17722 1.17744</text><text x="211" y="126">LinReg=0.0008  <tspan fill="#b87333">||</tspan>  QuadReg=0.0008  <tspan fill="#4b84c4">||</tspan>  LogReg=0.0008  <tspan fill="#b87333">||</tspan>  ExpReg=0.0008</text></g></g>`;

const arrowUp = x => `<path d="M${x} 620v-8M${x-4} 615.500l4-4 4 4" stroke="#ff0" stroke-width="2" fill="none"/>`;
const arrowDn = (x, y) => `<path d="M${x} ${y}v8M${x-4} ${y+4.5}l4 4 4-4" stroke="#ff0" stroke-width="2" fill="none"/>`;
const dash = '4 3';
$('p2').innerHTML = hline(26,'#f00') + hline(145,'#f00') + hline(51,'#c8d4dc',dash) + hline(119,'#c8d4dc',dash) + `<g transform="translate(-208,-450)">
<text x="212" y="462" fill="#fff">[ sc ] DYMI</text>
${line('208,563 216,504 224,513 232,564 240,534 248,549 256,580','#00f')}${line('208,506 216,506 224,469 232,469 240,463 248,527 256,590','#f00')}
${line('936,520 940,532 944,535 952,479 960,540 968,592 976,548 984,519 992,544 1000,544 1008,495 1016,493 1024,533 1032,563 1040,540 1048,526 1056,573 1064,512 1072,500 1080,495 1088,540 1096,574 1104,541 1112,534 1120,525 1128,550 1136,583 1145,546','#00f')}
${line('936,540 940,561 944,593 952,593 960,562 968,595 976,585 984,541 992,614 1000,614 1008,534 1016,539 1024,545 1032,593 1040,527 1048,565 1056,597 1064,529 1072,532 1080,469 1088,536 1096,535 1104,543 1112,540 1120,517 1128,517 1136,517 1145,567','#f00')}
${arrowDn(224,451)}${arrowDn(232,451)}${arrowDn(240,451)}${arrowDn(1080,451)}${[968,992,1000,1056].map(arrowUp).join('')}</g>`;
$('p3').innerHTML = hline(17,'#f22','5 3') + hline(153,'#f22','5 3') + `<g transform="translate(-208,-624)"><path d="M208 708h937v2H208z" fill="#dc143c"/><text x="212" y="636" fill="#fff">Vostro Hep</text></g>`;

const lab = (x, y, t, c = '#fff') => `<text x="${x}" y="${y+3}" fill="${c}">${t}</text>`;
const tick = y => `<path d="M-1 ${y}.5h4" stroke="#fff"/>`;
$('a1').innerHTML = Array.from({length:11}, (_, i) => tick(12+33*i) + lab(5, 13+33*i, (1.1831-.0009*i).toFixed(5))).join('') + `<path d="M1 214h40v13H1z" fill="#fff"/>` + lab(5,221,'1.17744','#000');
$('a2').innerHTML = lab(3,8,'100') + `<path d="M1 21h12v12H1zM1 140h12v12H1z" fill="#f00"/>` + lab(2,27,'85','#000') + lab(2,52,'70') + lab(2,120,'30') + lab(2,146,'15','#000') + lab(3,166,'0');
$('a3').innerHTML = lab(3,8,'100') + lab(2,18,'80') + lab(3,86,'0.00') + lab(2,154,'-80') + lab(3,164,'-100') + tick(85);
</script>
<script src="https://cdn.jsdelivr.net/npm/bootstrap@5.3.0/dist/js/bootstrap.bundle.min.js"></script>
</body>
</html>
